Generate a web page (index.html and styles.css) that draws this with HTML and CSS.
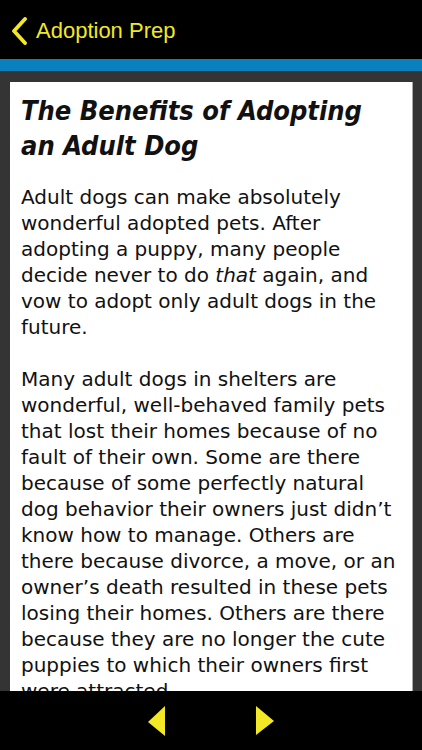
FILE: index.html
```html
<!DOCTYPE html>
<html>
<head>
<meta charset="utf-8">
<link rel="stylesheet" href="styles.css">
</head>
<body>
<div class="app">
  <header class="topbar">
    <svg class="back" width="18" height="28" viewBox="0 0 18 28"><path d="M15 2 L4 14 L15 26" fill="none" stroke="#f2e826" stroke-width="3.8" stroke-linecap="round" stroke-linejoin="round"/></svg>
    <span class="title">Adoption Prep</span>
  </header>
  <div class="stripe"></div>
  <main class="content">
    <article class="card">
      <h1>The Benefits of Adopting an Adult Dog</h1>
      <p>Adult dogs can make absolutely wonderful adopted pets. After adopting a puppy, many people decide never to do <em>that</em> again, and vow to adopt only adult dogs in the future.</p>
      <p>Many adult dogs in shelters are wonderful, well-behaved family pets that lost their homes because of no fault of their own. Some are there because of some perfectly natural dog behavior their owners just didn’t know how to manage. Others are there because divorce, a move, or an owner’s death resulted in these pets losing their homes. Others are there because they are no longer the cute puppies to which their owners first were attracted.</p>
    </article>
  </main>
  <footer class="bottombar">
    <svg class="arrow" width="20" height="32" viewBox="0 0 20 32"><path d="M18 1 L1 17 L18 31 Z" fill="#f2e826"/></svg>
    <svg class="arrow" width="20" height="32" viewBox="0 0 20 32"><path d="M1 1 L19 16 L1 30 Z" fill="#f2e826"/></svg>
  </footer>
</div>
</body>
</html>
```
FILE: styles.css
```css
html, body {
  margin: 0;
  padding: 0;
  background: #000;
}
.app {
  width: 422px;
  height: 750px;
  display: flex;
  flex-direction: column;
  overflow: hidden;
}
.topbar {
  height: 59px;
  flex: none;
  background: #000;
  display: flex;
  align-items: center;
  padding-left: 10px;
  gap: 8px;
  box-sizing: border-box;
  padding-top: 2px;
}
.title {
  font-family: "Liberation Sans", Arial, sans-serif;
  font-size: 22px;
  color: #f2e826;
}
.stripe {
  height: 12px;
  flex: none;
  background: #0a80bf;
}
.content {
  flex: 1;
  min-height: 0;
  overflow: hidden;
  background-color: #343434;
  background-image: radial-gradient(circle at 50% 50%, rgba(255,255,255,0.04) 0 3px, transparent 4px);
  background-size: 46px 46px;
  padding: 11px 10px 0 10px;
}
.card {
  background: #fff;
  box-shadow: 1px 0 0 #aaa;
  padding: 10px 14px 20px 11px;
  color: #111;
  font-family: "DejaVu Sans", Verdana, sans-serif;
}
.card h1 {
  font-family: "DejaVu Sans Condensed", "DejaVu Sans", sans-serif;
  font-stretch: condensed;
  font-size: 27px;
  font-style: italic;
  font-weight: bold;
  line-height: 35px;
  margin: 1px 0 21px 0;
}
.card p {
  font-size: 20px;
  line-height: 26px;
  margin: 0 0 26px 0;
}
.bottombar {
  height: 59px;
  flex: none;
  background: #000;
  display: flex;
  justify-content: center;
  align-items: center;
  gap: 88px;
}
```
